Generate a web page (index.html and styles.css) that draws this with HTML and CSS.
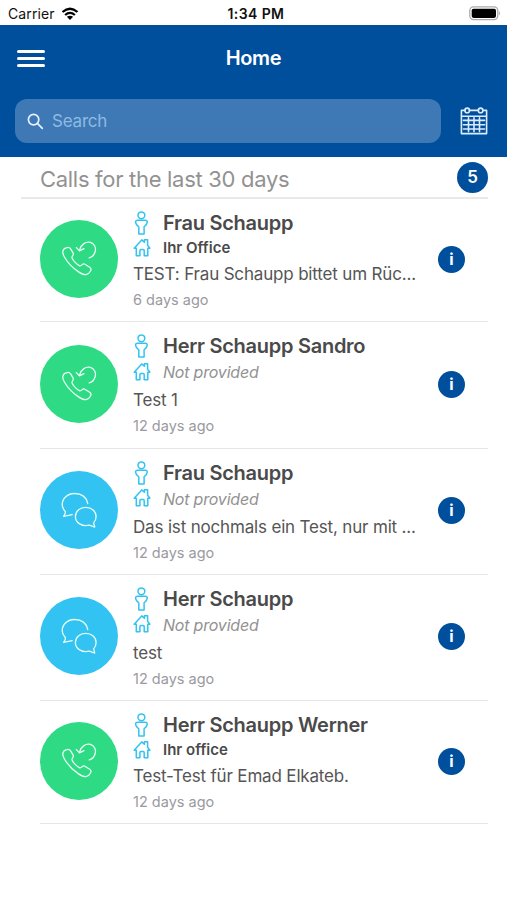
FILE: index.html
```html
<!doctype html>
<html lang="en" >
<head>
<meta charset="utf-8" >
<meta name="viewport" content="width=device-width,initial-scale=1" >
<title>Home</title>
<link rel="stylesheet" href="styles.css">
</head>
<body>

	<!-- shared icons -->
	<svg class="sprite" >
		<symbol id="person" viewBox="0 0 16 24" >
			<circle cx="8.4" cy="4.3" r="3.4" />
			<path d="M4.8 9.2H12Q14.5 9.2 14.2 11.4Q13.8 14.2 11.1 15.8V22.9H5.8V15.8Q3 14.2 2.6 11.4Q2.3 9.2 4.8 9.2Z" />
		</symbol>
		<symbol id="house" viewBox="0 0 18 19" >
			<path d="M3.3 10.2L1.2 10.2L8.7 1.9L11.4 4.3V1.7H14.6V7.3L16.9 10.2H14.8V17.8H11.2V12.8Q11.2 11.4 10.2 11.4H7.8Q6.9 11.4 6.9 12.8V17.8H3.3Z" />
		</symbol>
		<symbol id="callback" viewBox="0 0 36 36" >
			<path d="M1.8 10.4C2.2 8.6 4 6.9 6 6.6C7.6 6.2 8.8 6.6 9.6 7.8L12.2 12.2C13 14.2 10.7 15 11 16.7C11.8 19.3 16 23.9 18.8 24.8C20.6 25.4 21.4 22.2 23.4 23L28.7 26.2C30.4 27.4 30.2 29 29.2 30.5C28.4 32 26.6 33.5 25 33.7C22.4 33.9 19.6 32.2 17.2 30.6C11.3 26.7 6.6 21.5 3.4 16C2.2 13.9 1.5 12.2 1.8 10.4Z" />
			<path d="M18.7 8.7C20.1 3.5 24.9 .1 29.4 1.4C33.4 2.6 35.3 6.7 34.1 10.7C33.2 13.9 31 16.2 28.2 16.8M15.4 6.6L18.4 9.9L22.9 7.6" />
		</symbol>
		<symbol id="chat" viewBox="0 0 36 36" >
			<path d="M26.8 11.6C25.5 5.6 20.8 1.5 13.6 1.5C6.5 1.5 1.2 6.5 1.2 12.7C1.2 16.3 3 18.1 4.4 19.6C4.6 21.2 3.8 22.8 2.6 24.3C5.2 23.8 8.2 23.2 11.2 22.6" />
			<path d="M24.7 15.3C30.7 15.3 35.1 19.2 35.1 24.4C35.1 27.3 33.9 29.5 32.6 30.9L33.8 35C31.6 34.6 29.7 33.5 28.1 33.2C21.2 34.9 14.4 30.8 14.4 24.4C14.4 19.2 18.8 15.3 24.7 15.3Z" />
		</symbol>
	</svg>

	<div class="status" >
		<div class="carrier" >Carrier
			<svg width="18" height="14" viewBox="0 0 18 14" ><path d="M1.5 5Q9-1.6 16.5 5M4.1 8Q9 3.8 13.9 8" /><path class="dot" d="M9 13L5.9 9.8Q9 7.5 12.1 9.8Z" /></svg>
		</div>
		<div class="clock" >1:34 PM</div>
		<svg class="battery" width="32" height="15" viewBox="0 0 32 15" ><rect class="shell" x=".8" y=".8" width="28" height="12.8" rx="3.8" /><rect x="2.7" y="2.7" width="24.3" height="9.2" rx="1.8" /><path class="tip" d="M30 5Q32 7.2 30 9.4Z" /></svg>
	</div>

	<header class="header" >
		<div class="navbar" >
			<div class="hamburger" ><span></span><span></span><span></span></div>
			<h1>Home</h1>
		</div>
		<div class="tools" >
			<div class="search" >
				<svg width="17" height="17" viewBox="0 0 17 17" ><circle cx="6.6" cy="6.6" r="5.2" /><path d="M10.4 10.4L15.3 15.3" /></svg>
				<span>Search</span>
			</div>
			<svg class="calendar" width="28" height="28" viewBox="0 0 28 28" ><path d="M5 3.4H1.4V26.6H26.6V3.4H23M9.4 3.4H18.4M1.4 9.3H26.6" /><circle cx="7.2" cy="3.4" r="2.3" /><circle cx="20.6" cy="3.4" r="2.3" /><path d="M3.4 13.4H24.6M3.4 17.7H24.6M3.4 22H24.6M8.5 10.8V24.6M14 10.8V24.6M19.5 10.8V24.6" /></svg>
		</div>
	</header>

	<main>

		<div class="summary" >
			<h2>Calls for the last 30 days</h2>
			<span class="count" >5</span>
		</div>

		<div class="calls" >

			<div class="call" >
				<div class="avatar green" ><svg><use href="#callback" /></svg></div>
				<div class="info" >
					<div class="name" ><svg><use href="#person" /></svg>Frau Schaupp</div>
					<div class="office" ><svg><use href="#house" /></svg>Ihr Office</div>
					<div class="message" >TEST: Frau Schaupp bittet um Rüc...</div>
					<div class="time" >6 days ago</div>
				</div>
				<div class="more" >i</div>
			</div>

			<div class="call" >
				<div class="avatar green" ><svg><use href="#callback" /></svg></div>
				<div class="info" >
					<div class="name" ><svg><use href="#person" /></svg>Herr Schaupp Sandro</div>
					<div class="office missing" ><svg><use href="#house" /></svg>Not provided</div>
					<div class="message" >Test 1</div>
					<div class="time" >12 days ago</div>
				</div>
				<div class="more" >i</div>
			</div>

			<div class="call" >
				<div class="avatar blue" ><svg><use href="#chat" /></svg></div>
				<div class="info" >
					<div class="name" ><svg><use href="#person" /></svg>Frau Schaupp</div>
					<div class="office missing" ><svg><use href="#house" /></svg>Not provided</div>
					<div class="message" >Das ist nochmals ein Test, nur mit ...</div>
					<div class="time" >12 days ago</div>
				</div>
				<div class="more" >i</div>
			</div>

			<div class="call" >
				<div class="avatar blue" ><svg><use href="#chat" /></svg></div>
				<div class="info" >
					<div class="name" ><svg><use href="#person" /></svg>Herr Schaupp</div>
					<div class="office missing" ><svg><use href="#house" /></svg>Not provided</div>
					<div class="message" >test</div>
					<div class="time" >12 days ago</div>
				</div>
				<div class="more" >i</div>
			</div>

			<div class="call" >
				<div class="avatar green" ><svg><use href="#callback" /></svg></div>
				<div class="info" >
					<div class="name" ><svg><use href="#person" /></svg>Herr Schaupp Werner</div>
					<div class="office" ><svg><use href="#house" /></svg>Ihr office</div>
					<div class="message" >Test-Test für Emad Elkateb.</div>
					<div class="time" >12 days ago</div>
				</div>
				<div class="more" >i</div>
			</div>

		</div>

	</main>

</body>
</html>
```
FILE: styles.css
```css
	html { --blue: #004f9c; --green: #2edb84; --sky: #32c3f3; }

	body { background-color: #fff; color: #4a4a4a; font-family: Inter, "Liberation Sans", sans-serif; margin: 0; }

	h1, h2 { margin: 0; }

	svg { fill: none; flex: none; stroke-linecap: round; stroke-linejoin: round; }

	.sprite { display: block; height: 0; width: 0; }

	/* status bar */
	.status { align-items: center; box-sizing: border-box; color: #111; display: grid; font-size: 14px; grid-template-columns: 1fr auto 1fr;
		height: 25px; padding: 2px 6px 0 8px; }
	.carrier { align-items: center; display: flex; gap: 6px; letter-spacing: .1px; }
	.carrier svg { stroke: #000; stroke-linecap: butt; stroke-width: 2.3; }
	.carrier .dot { fill: #000; stroke: none; }
	.clock { font-weight: 600; letter-spacing: .4px; padding-left: 3px; }
	.battery { fill: #000; justify-self: end; }
	.battery .shell { fill: none; stroke: #aaa; stroke-width: 1.3; }
	.battery .tip { fill: #aaa; }

	/* blue header */
	.header { background-color: var( --blue ); box-sizing: border-box; height: 132px; }
	.navbar { align-items: center; display: grid; grid-template-columns: 1fr auto 1fr; height: 65px; padding: 0 16px; }
	.navbar h1 { color: #fff; font-size: 20px; font-weight: 600; letter-spacing: -.4px; }
	.hamburger { display: flex; flex-direction: column; gap: 4px; margin: 1px 0 0 1px; width: 28px; }
	.hamburger span { background-color: #fff; border-radius: 2px; height: 3px; }
	.tools { align-items: center; display: flex; gap: 19px; padding: 9px 19px 0 15px; }
	.search { align-items: center; background-color: #3e79b5; border-radius: 12px; box-sizing: border-box; color: #8fb9e2; display: flex;
		flex: 1; font-size: 17px; gap: 8px; height: 44px; letter-spacing: -.2px; padding: 0 12px; }
	.search svg { stroke: #e6f1ff; stroke-width: 1.7; }
	.calendar { stroke: #dcecff; stroke-width: 1.6; }

	/* list heading */
	.summary { align-items: center; border-bottom: 2px solid #e9e9e9; box-sizing: border-box; display: flex; height: 42px;
		justify-content: space-between; margin: 0 19px 0 21px; padding: 2px 0 0 19px; }
	.summary h2 { color: #929292; font-size: 22px; font-weight: 400; letter-spacing: -.3px; padding-top: 2px; }
	.count { background-color: var( --blue ); border-radius: 50%; color: #fff; font-size: 17px; font-weight: 600; height: 31px; line-height: 31px;
		margin-bottom: 2px; text-align: center; width: 31px; }

	/* one call */
	.calls { margin: 0 19px 0 40px; }
	.call { align-items: center; border-bottom: 1px solid #e6e6e6; display: flex; }
	.avatar { align-items: center; border-radius: 50%; display: flex; height: 78px; justify-content: center; margin-bottom: 2.4px; width: 78px; }
	.avatar svg { height: 36px; stroke: #e8fff4; stroke-width: 1.3; width: 36px; }
	.green { background-color: var( --green ); }
	.blue { background-color: var( --sky ); }
	.info { flex: 1; margin-left: 15px; padding: 12px 0 9.25px; white-space: nowrap; }
	.name, .office { align-items: center; display: flex; }
	.name { font-size: 20px; font-weight: 600; height: 24px; letter-spacing: -.27px; }
	.name svg, .office svg { stroke: var( --sky ); stroke-width: 1.5; }
	.name svg { height: 24px; margin-right: 14px; width: 16px; }
	.office { font-size: 15px; font-weight: 600; height: 25px; }
	.office svg { height: 19px; margin-right: 12px; width: 18px; }
	.missing { color: #929292; font-size: 16px; font-style: italic; font-weight: 400; height: 28px; letter-spacing: -.2px; }
	.missing svg { margin-bottom: 2px; }
	.message { color: #555; font-size: 17px; letter-spacing: -.17px; line-height: 28px; }
	.time { color: #9a9a9f; font-size: 14.5px; line-height: 24px; }
	.more { background-color: var( --blue ); border-radius: 50%; color: #fff; font-size: 16px; font-weight: 700; height: 27px; line-height: 27px;
		margin: 0 23px 1px 0; text-align: center; width: 27px; }
```
